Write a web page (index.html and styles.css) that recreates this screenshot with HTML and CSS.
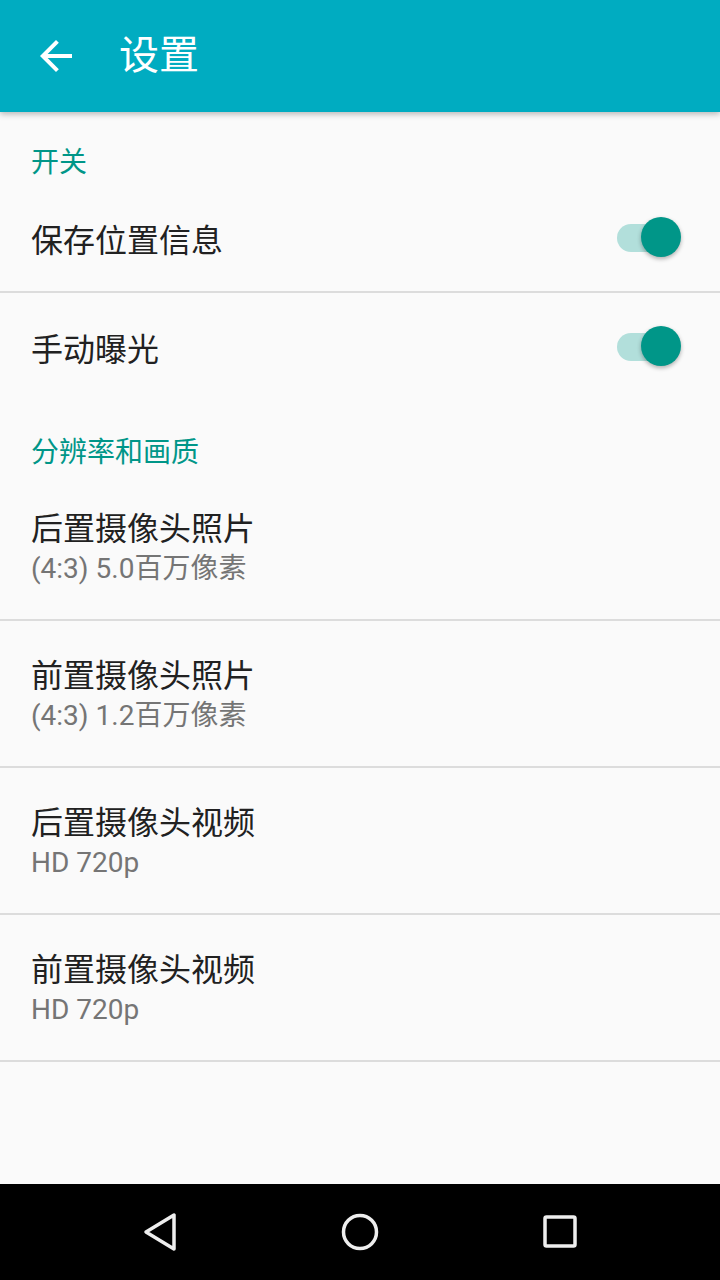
FILE: index.html
```html
<!DOCTYPE html>
<html lang="zh-CN">
<head>
    <meta charset="UTF-8">
    <meta name="viewport" content="width=device-width, initial-scale=1.0">
    <title>设置</title>
    <link rel="stylesheet" href="styles.css">
</head>
<body>

    <header class="app-bar">
        <button class="nav-back" aria-label="返回">
            <svg viewBox="0 0 24 24" width="48" height="48">
                <path d="M20 11H7.83l5.59-5.59L12 4l-8 8 8 8 1.41-1.41L7.83 13H20v-2z" fill="#fff"/>
            </svg>
        </button>
        <h1 class="app-title">设置</h1>
    </header>

    <main class="prefs">
        <div class="pref-category">开关</div>
        <div class="pref pref-switch">
            <span class="pref-title">保存位置信息</span>
            <span class="switch on"><span class="track"></span><span class="thumb"></span></span>
        </div>
        <div class="pref pref-switch last">
            <span class="pref-title">手动曝光</span>
            <span class="switch on"><span class="track"></span><span class="thumb"></span></span>
        </div>

        <div class="pref-category">分辨率和画质</div>
        <div class="pref pref-summary">
            <span class="pref-title">后置摄像头照片</span>
            <span class="pref-sub">(4:3) 5.0百万像素</span>
        </div>
        <div class="pref pref-summary">
            <span class="pref-title">前置摄像头照片</span>
            <span class="pref-sub">(4:3) 1.2百万像素</span>
        </div>
        <div class="pref pref-summary">
            <span class="pref-title">后置摄像头视频</span>
            <span class="pref-sub">HD 720p</span>
        </div>
        <div class="pref pref-summary">
            <span class="pref-title">前置摄像头视频</span>
            <span class="pref-sub">HD 720p</span>
        </div>
    </main>

    <nav class="sys-nav">
        <span class="sys-btn">
            <svg viewBox="0 0 48 48" width="48" height="48">
                <path d="M10 24 L38 7 L38 41 Z" fill="none" stroke="#eee" stroke-width="3.5" stroke-linejoin="round"/>
            </svg>
        </span>
        <span class="sys-btn">
            <svg viewBox="0 0 48 48" width="48" height="48">
                <circle cx="24" cy="24" r="16.5" fill="none" stroke="#eee" stroke-width="3.5"/>
            </svg>
        </span>
        <span class="sys-btn">
            <svg viewBox="0 0 48 48" width="48" height="48">
                <rect x="9" y="9" width="30" height="29" rx="1.5" fill="none" stroke="#eee" stroke-width="3.5"/>
            </svg>
        </span>
    </nav>

</body>
</html>
```

FILE: styles.css
```css
body {
    font-family: Roboto, "Noto Sans CJK SC", sans-serif;
    background-color: #fafafa;
    margin: 0;
    width: 720px;
    height: 1280px;
    display: flex;
    flex-direction: column;
}

.app-bar {
    position: relative;
    z-index: 1;
    height: 112px;
    flex: none;
    background-color: #00acc1;
    display: flex;
    align-items: center;
    padding-left: 32px;
    box-shadow: 0 2px 6px rgba(0, 0, 0, 0.28);
}

.nav-back {
    width: 48px;
    height: 48px;
    padding: 0;
    border: none;
    background: none;
    display: flex;
}

.app-title {
    margin: 0 0 0 39px;
    font-size: 40px;
    font-weight: normal;
    line-height: 48px;
    color: #fff;
}

.prefs {
    flex: 1;
}

.pref-category {
    height: 72px;
    box-sizing: border-box;
    padding: 37px 31px 0;
    font-size: 28px;
    line-height: 28px;
    color: #009688;
}

.pref {
    padding: 0 39px 0 31px;
    border-bottom: 2px solid #dcdcdc;
}

.pref.last {
    border-bottom-color: transparent;
}

.pref-title {
    font-size: 32px;
    color: #212121;
}

.pref-switch {
    height: 107px;
    display: flex;
    align-items: center;
    justify-content: space-between;
}

.pref-summary {
    height: 145px;
    display: flex;
    flex-direction: column;
}

.pref-summary .pref-title {
    margin-top: 35px;
    line-height: 40px;
}

.pref-sub {
    font-size: 28px;
    line-height: 40px;
    color: #757575;
}

.switch {
    position: relative;
    width: 64px;
    height: 40px;
    margin-top: -2px;
}

.switch .track {
    position: absolute;
    left: 0;
    top: 7px;
    width: 58px;
    height: 28px;
    border-radius: 14px;
    background-color: #b2dfdb;
}

.switch .thumb {
    position: absolute;
    right: 0;
    top: 0;
    width: 40px;
    height: 40px;
    border-radius: 50%;
    background-color: #009688;
    box-shadow: 0 2px 4px rgba(0, 0, 0, 0.3);
}

.sys-nav {
    height: 96px;
    flex: none;
    background-color: #000;
    display: grid;
    grid-template-columns: repeat(3, 1fr);
    padding: 0 60px;
}

.sys-btn {
    display: flex;
    align-items: center;
    justify-content: center;
}
```
